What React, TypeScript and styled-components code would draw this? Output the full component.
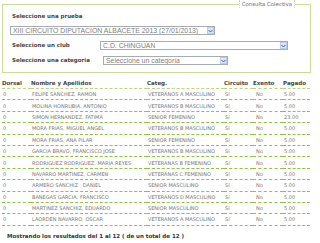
import styled, { createGlobalStyle } from 'styled-components';

type TRunner = {
	dorsal: string;
	name: string;
	category: string;
	circuit: string;
	exempt: string;
	paid: string;
};

const runners: TRunner[] = [
	{ dorsal: '0', name: 'FELIPE SANCHEZ, RAMON', category: 'VETERANOS A MASCULINO', circuit: 'Sí', exempt: 'No', paid: '5.00' },
	{ dorsal: '0', name: 'MOLINA HONRUBIA, ANTONIO', category: 'VETERANOS B MASCULINO', circuit: 'Sí', exempt: 'No', paid: '5.00' },
	{ dorsal: '0', name: 'SIMON HERNANDEZ, FATIMA', category: 'SENIOR FEMENINO', circuit: 'Sí', exempt: 'No', paid: '23.00' },
	{ dorsal: '0', name: 'MORA FRIAS, MIGUEL ANGEL', category: 'VETERANOS B MASCULINO', circuit: 'Sí', exempt: 'No', paid: '5.00' },
	{ dorsal: '0', name: 'MORA FRIAS, ANA PILAR', category: 'SENIOR FEMENINO', circuit: 'Sí', exempt: 'No', paid: '5.00' },
	{ dorsal: '0', name: 'GARCIA BRAVO, FRANCISCO JOSE', category: 'VETERANOS B MASCULINO', circuit: 'Sí', exempt: 'No', paid: '5.00' },
	{ dorsal: '0', name: 'RODRIGUEZ RODRIGUEZ, MARIA REYES', category: 'VETERANAS B FEMENINO', circuit: 'Sí', exempt: 'No', paid: '5.00' },
	{ dorsal: '0', name: 'NAVARRO MARTINEZ, CARMEN', category: 'VETERANAS C FEMENINO', circuit: 'Sí', exempt: 'No', paid: '5.00' },
	{ dorsal: '0', name: 'ARMERO SANCHIZ , DANIEL', category: 'SENIOR MASCULINO', circuit: 'Sí', exempt: 'No', paid: '5.00' },
	{ dorsal: '0', name: 'BANEGAS GARCIA, FRANCISCO', category: 'VETERANOS D MASCULINO', circuit: 'Sí', exempt: 'No', paid: '5.00' },
	{ dorsal: '0', name: 'MARTINEZ SANCHIZ, EDUARDO', category: 'SENIOR MASCULINO', circuit: 'Sí', exempt: 'No', paid: '5.00' },
	{ dorsal: '0', name: 'LAORDEN NAVARRO, OSCAR', category: 'VETERANOS A MASCULINO', circuit: 'Sí', exempt: 'No', paid: '5.00' },
];

function FakeSelect({ value, width }: { value: string; width: number }) {
	return (
		<SelectBox $width={width}>
			<SelectText>{value}</SelectText>
			<ArrowButton>
				<svg width='5' height='4' viewBox='0 0 5 4'>
					<path d='M0.5 1 L2.5 3 L4.5 1' fill='none' stroke='#4d6185' strokeWidth='1' />
				</svg>
			</ArrowButton>
		</SelectBox>
	);
}

export default function App() {
	return (
		<Page>
			<GlobalStyle />
			<Fieldset>
				<Legend>Consulta Colectiva</Legend>
				<Label>Seleccione una prueba</Label>
				<FirstSelectWrap>
					<FakeSelect value='XIII CIRCUITO DIPUTACION ALBACETE 2013 (27/01/2013)' width={205} />
				</FirstSelectWrap>
				<FilterRow>
					<Label $width={90}>Seleccione un club</Label>
					<FakeSelect value='C.D. CHINGUAN' width={188} />
				</FilterRow>
				<FilterRow>
					<Label $width={93}>Seleccione una categoria</Label>
					<FakeSelect value='Seleccione un categoría' width={125} />
				</FilterRow>
			</Fieldset>

			<Table>
				<colgroup>
					<col style={{ width: 29 }} />
					<col style={{ width: 116 }} />
					<col style={{ width: 77 }} />
					<col style={{ width: 29 }} />
					<col style={{ width: 30 }} />
					<col style={{ width: 27 }} />
				</colgroup>
				<thead>
					<tr>
						<Th>Dorsal</Th>
						<Th>Nombre y Apellidos</Th>
						<Th>Categ.</Th>
						<Th>Circuito</Th>
						<Th>Exento</Th>
						<Th>Pagado</Th>
					</tr>
				</thead>
				<tbody>
					{runners.map((runner, idx) => (
						<tr key={idx}>
							<Td>{runner.dorsal}</Td>
							<Td>{runner.name}</Td>
							<Td>{runner.category}</Td>
							<Td>{runner.circuit}</Td>
							<Td $indent={3}>{runner.exempt}</Td>
							<Td>{runner.paid}</Td>
						</tr>
					))}
				</tbody>
			</Table>

			<Summary>Mostrando los resultados del 1 al 12 ( de un total de 12 )</Summary>
		</Page>
	);
}

const GlobalStyle = createGlobalStyle`
	body {
		margin: 0;
		background: #fff;
		font-family: 'DejaVu Sans', Verdana, sans-serif;
	}
`;

const Page = styled.div`
	width: 320px;
	padding: 0 0 0 2px;
	box-sizing: border-box;
`;

const Fieldset = styled.fieldset`
	width: 309px;
	box-sizing: border-box;
	margin: 0;
	padding: 5px 8px 7px 7px;
	border: 1px solid #c9dd95;
`;

const Legend = styled.legend`
	margin-left: auto;
	margin-right: 7px;
	padding: 0 2px;
	height: 8px;
	line-height: 8px;
	font-size: 5.4px;
	color: #6a6a6a;
	border-left: 1px dotted #c9dd95;
	border-right: 1px dotted #c9dd95;
`;

const Label = styled.div<{ $width?: number }>`
	width: ${(p) => (p.$width ? `${p.$width}px` : 'auto')};
	flex: none;
	box-sizing: border-box;
	padding-left: 2px;
	font-size: 5.5px;
	line-height: 7px;
	font-weight: bold;
	color: #444;
`;

const FirstSelectWrap = styled.div`
	margin-top: 6px;
`;

const FilterRow = styled.div`
	display: flex;
	align-items: center;
	margin-top: 6px;
`;

const SelectBox = styled.div<{ $width: number }>`
	width: ${(p) => p.$width}px;
	height: 9px;
	box-sizing: border-box;
	border: 1px solid #a5acb2;
	background: #fff;
	display: flex;
	align-items: center;
	justify-content: space-between;
`;

const SelectText = styled.span`
	padding-left: 2px;
	font-family: 'Liberation Sans', Arial, sans-serif;
	font-size: 6.9px;
	line-height: 7px;
	color: #808080;
	white-space: nowrap;
	overflow: hidden;
`;

const ArrowButton = styled.span`
	width: 7px;
	height: 7px;
	flex: none;
	box-sizing: border-box;
	border: 1px solid #b9cbf1;
	background: #d9e5fc;
	display: flex;
	align-items: center;
	justify-content: center;
`;

const Table = styled.table`
	width: 308px;
	margin-top: 4px;
	border-collapse: collapse;
	table-layout: fixed;
`;

const Th = styled.th`
	height: 11px;
	padding: 0;
	text-align: left;
	font-size: 5.5px;
	font-weight: bold;
	color: #444;
	border-bottom: 1px dashed #b7d77a;
	white-space: nowrap;
`;

const Td = styled.td<{ $indent?: number }>`
	height: 10.4px;
	padding: 0 0 0 ${(p) => p.$indent ?? 1}px;
	font-size: 5px;
	color: #777;
	border-bottom: 1px dashed #8cc63f;
	white-space: nowrap;
	overflow: hidden;
`;

const Summary = styled.p`
	margin: 7px 0 0 5px;
	font-size: 5.5px;
	line-height: 7px;
	font-weight: bold;
	color: #333;
`;
